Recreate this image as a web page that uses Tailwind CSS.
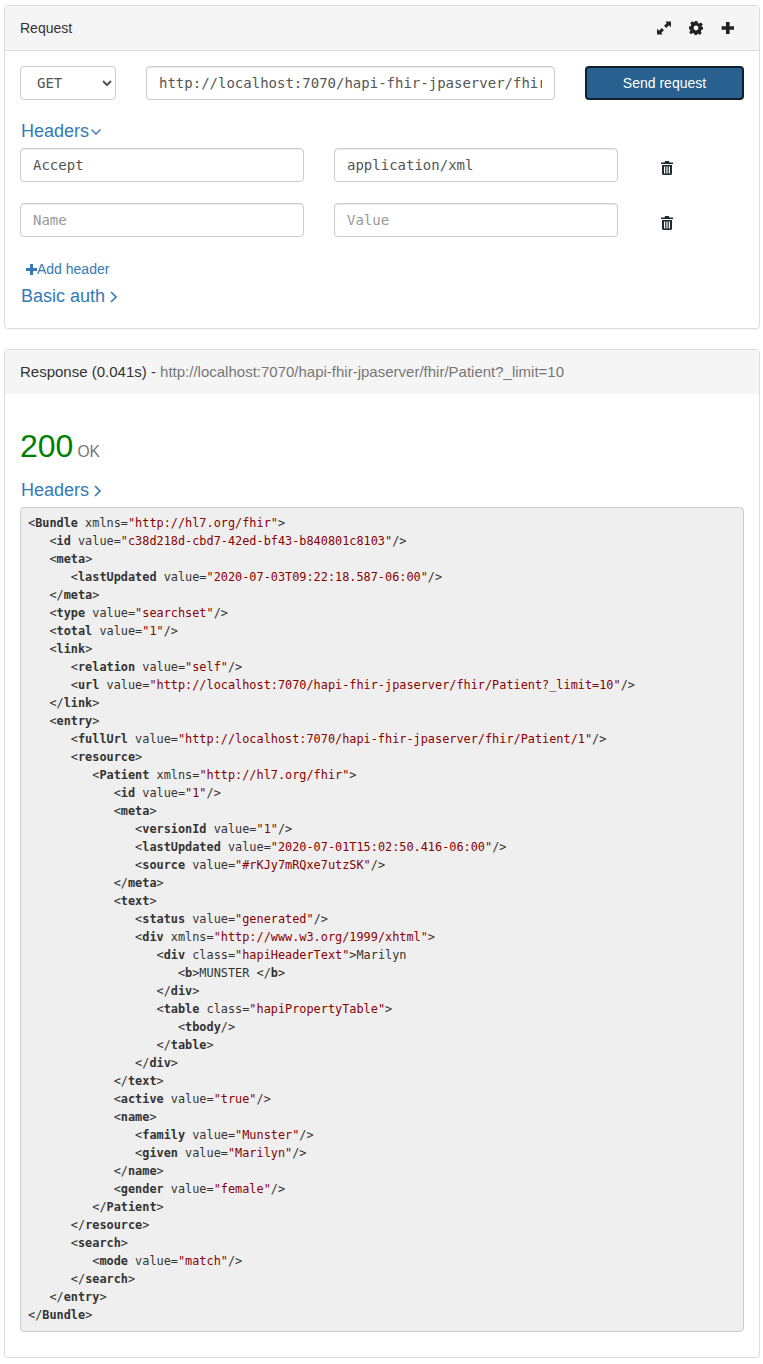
<!DOCTYPE html>
<html lang="en">
<head>
    <meta charset="UTF-8">
    <title>FHIR request</title>
    <script src="https://cdn.jsdelivr.net/npm/@tailwindcss/browser@4"></script>
</head>
<body class="bg-white font-['Liberation_Sans',sans-serif] text-[14px] text-[#333] leading-[20px]">
<div class="pl-[4px] pr-[3px] pt-[5px]">

    <!-- request panel -->
    <div class="border border-[#ddd] rounded-[4px] shadow-[0_1px_1px_rgba(0,0,0,0.05)] h-[324px]">
        <div class="flex items-center justify-between h-[45px] bg-[#f5f5f5] border-b border-[#ddd] rounded-t-[3px] pl-[15px] pr-[24px]">
            <span class="text-[14px]">Request</span>
            <div class="flex items-center gap-[18px] text-[#222]">
                <svg class="w-[14px] h-[14px]" viewBox="0 0 14 14" fill="currentColor"><path d="M8.2 0.5H14V6.3L11.9 4.2 9.2 6.9 7.1 4.8 9.8 2.1ZM5.8 13.5H0V7.7L2.1 9.8 4.8 7.1 6.9 9.2 4.2 11.9Z"/></svg>
                <svg class="w-[14px] h-[14px]" viewBox="0 0 14 14" fill="currentColor"><path fill-rule="evenodd" d="M5.6 0H8.4L8.8 2 10.2 2.6 12 1.5 13.9 3.4 12.5 5.1 13 6 14 6V8.4L12.4 8.8 11.8 10.2 12.7 12 10.7 13.9 9 12.6 8.4 12.9 8 14H5.6L5.2 12.6 3.8 12 2 13.2 0.2 11.2 1.5 9.5 1 8.4 0 8.2V5.6L1.6 5.2 2.2 3.8 1.2 2 3.2 0.2 5 1.5 5.4 1.2ZM7 4.6A2.4 2.4 0 1 0 7 9.4 2.4 2.4 0 1 0 7 4.6Z"/></svg>
                <svg class="w-[14px] h-[14px]" viewBox="0 0 14 14" fill="currentColor"><path d="M5 1H8.6V5.2H13V8.8H8.6V13H5V8.8H0.6V5.2H5Z"/></svg>
            </div>
        </div>
        <div class="px-[15px] pt-[15px]">
            <div class="flex items-center">
                <select class="w-[96px] h-[34px] bg-white border border-[#ccc] rounded-[4px] pl-[12px] text-[14px] text-[#555] font-['DejaVu_Sans_Mono',monospace] shrink-0">
                    <option>GET</option>
                </select>
                <input class="w-[409px] h-[34px] ml-[30px] border border-[#ccc] rounded-[4px] px-[12px] text-[14px] text-[#555] font-['DejaVu_Sans_Mono',monospace] shadow-[inset_0_1px_1px_rgba(0,0,0,0.075)]" value="http://localhost:7070/hapi-fhir-jpaserver/fhir/Patient?_limit=10">
                <button class="w-[159px] h-[34px] ml-[30px] bg-[#286090] border-2 border-[#0f1f2c] rounded-[4px] text-white text-[14px]">Send request</button>
            </div>
            <a class="flex items-center gap-[2px] mt-[21px] ml-[1px] text-[18px] text-[#337ab7] leading-[20px]">Headers
                <svg class="w-[10px] h-[10px] mt-[1px]" viewBox="0 0 10 10" fill="none" stroke="currentColor" stroke-width="1.4"><path d="M0.5 2.5L5 7 9.5 2.5"/></svg>
            </a>
            <div class="flex items-center mt-[7px]">
                <input class="w-[284px] h-[34px] border border-[#ccc] rounded-[4px] px-[12px] text-[14px] text-[#555] font-['DejaVu_Sans_Mono',monospace] shadow-[inset_0_1px_1px_rgba(0,0,0,0.075)]" value="Accept">
                <input class="w-[284px] h-[34px] ml-[30px] border border-[#ccc] rounded-[4px] px-[12px] text-[14px] text-[#555] font-['DejaVu_Sans_Mono',monospace] shadow-[inset_0_1px_1px_rgba(0,0,0,0.075)]" value="application/xml">
                <svg class="w-[12px] h-[14px] ml-[43px] mt-[5px] text-[#1f2a30]" viewBox="0 0 12 14" fill="currentColor"><path fill-rule="evenodd" d="M4.2 0H7.8L8.6 1.5H12V3H0V1.5H3.4ZM1 4H11V13L10 14H2L1 13ZM3 5.5V12.5H4.2V5.5ZM5.4 5.5V12.5H6.6V5.5ZM7.8 5.5V12.5H9V5.5Z"/></svg>
            </div>
            <div class="flex items-center mt-[21px]">
                <input class="w-[284px] h-[34px] border border-[#ccc] rounded-[4px] px-[12px] text-[14px] text-[#555] placeholder:text-[#999] font-['DejaVu_Sans_Mono',monospace] shadow-[inset_0_1px_1px_rgba(0,0,0,0.075)]" placeholder="Name">
                <input class="w-[284px] h-[34px] ml-[30px] border border-[#ccc] rounded-[4px] px-[12px] text-[14px] text-[#555] placeholder:text-[#999] font-['DejaVu_Sans_Mono',monospace] shadow-[inset_0_1px_1px_rgba(0,0,0,0.075)]" placeholder="Value">
                <svg class="w-[12px] h-[14px] ml-[43px] mt-[5px] text-[#1f2a30]" viewBox="0 0 12 14" fill="currentColor"><path fill-rule="evenodd" d="M4.2 0H7.8L8.6 1.5H12V3H0V1.5H3.4ZM1 4H11V13L10 14H2L1 13ZM3 5.5V12.5H4.2V5.5ZM5.4 5.5V12.5H6.6V5.5ZM7.8 5.5V12.5H9V5.5Z"/></svg>
            </div>
            <a class="flex items-center mt-[22px] ml-[6px] text-[14px] text-[#337ab7]">
                <svg class="w-[11px] h-[11px]" viewBox="0 0 11 11" fill="currentColor"><path d="M4 0H7V4H11V7H7V11H4V7H0V4H4Z"/></svg>Add header
            </a>
            <a class="flex items-center gap-[4px] mt-[7px] ml-[1px] text-[18px] text-[#337ab7] leading-[20px]">Basic auth
                <svg class="w-[8px] h-[12px] mt-[1px]" viewBox="0 0 8 12" fill="none" stroke="currentColor" stroke-width="1.6"><path d="M2 1L7 6 2 11"/></svg>
            </a>
        </div>
    </div>

    <!-- response panel -->
    <div class="mt-[20px] border border-[#ddd] rounded-[4px] shadow-[0_1px_1px_rgba(0,0,0,0.05)] pb-[25px]">
        <div class="flex items-center h-[44px] bg-[#f5f5f5] rounded-t-[3px] px-[15px] text-[15px]">
            <span>Response (0.041s) - <span class="text-[#777]">http://localhost:7070/hapi-fhir-jpaserver/fhir/Patient?_limit=10</span></span>
        </div>
        <div class="px-[15px]">
            <div class="mt-[32px] flex items-baseline leading-[40px]">
                <span class="text-[32px] text-[#008000]">200</span>
                <span class="ml-[4px] text-[15.6px] text-[#777]">OK</span>
            </div>
            <a class="flex items-center gap-[4px] mt-[8px] ml-[1px] text-[18px] text-[#337ab7] leading-[20px]">Headers
                <svg class="w-[8px] h-[12px] mt-[1px]" viewBox="0 0 8 12" fill="none" stroke="currentColor" stroke-width="1.6"><path d="M2 1L7 6 2 11"/></svg>
            </a>
            <pre class="mt-[7px] bg-[#efefef] border border-[#ccc] rounded-[4px] pl-[7px] pt-[6px] pb-[7px] text-[11.87px] leading-[18px] text-[#333] font-['DejaVu_Sans_Mono',monospace]">&lt;<b>Bundle</b> xmlns=<span class="text-[#800]">"http://hl7.org/fhir"</span>&gt;
   &lt;<b>id</b> value=<span class="text-[#800]">"c38d218d-cbd7-42ed-bf43-b840801c8103"</span>/&gt;
   &lt;<b>meta</b>&gt;
      &lt;<b>lastUpdated</b> value=<span class="text-[#800]">"2020-07-03T09:22:18.587-06:00"</span>/&gt;
   &lt;/<b>meta</b>&gt;
   &lt;<b>type</b> value=<span class="text-[#800]">"searchset"</span>/&gt;
   &lt;<b>total</b> value=<span class="text-[#800]">"1"</span>/&gt;
   &lt;<b>link</b>&gt;
      &lt;<b>relation</b> value=<span class="text-[#800]">"self"</span>/&gt;
      &lt;<b>url</b> value=<span class="text-[#800]">"http://localhost:7070/hapi-fhir-jpaserver/fhir/Patient?_limit=10"</span>/&gt;
   &lt;/<b>link</b>&gt;
   &lt;<b>entry</b>&gt;
      &lt;<b>fullUrl</b> value=<span class="text-[#800]">"http://localhost:7070/hapi-fhir-jpaserver/fhir/Patient/1"</span>/&gt;
      &lt;<b>resource</b>&gt;
         &lt;<b>Patient</b> xmlns=<span class="text-[#800]">"http://hl7.org/fhir"</span>&gt;
            &lt;<b>id</b> value=<span class="text-[#800]">"1"</span>/&gt;
            &lt;<b>meta</b>&gt;
               &lt;<b>versionId</b> value=<span class="text-[#800]">"1"</span>/&gt;
               &lt;<b>lastUpdated</b> value=<span class="text-[#800]">"2020-07-01T15:02:50.416-06:00"</span>/&gt;
               &lt;<b>source</b> value=<span class="text-[#800]">"#rKJy7mRQxe7utzSK"</span>/&gt;
            &lt;/<b>meta</b>&gt;
            &lt;<b>text</b>&gt;
               &lt;<b>status</b> value=<span class="text-[#800]">"generated"</span>/&gt;
               &lt;<b>div</b> xmlns=<span class="text-[#800]">"http://www.w3.org/1999/xhtml"</span>&gt;
                  &lt;<b>div</b> class=<span class="text-[#800]">"hapiHeaderText"</span>&gt;Marilyn
                     &lt;<b>b</b>&gt;MUNSTER &lt;/<b>b</b>&gt;
                  &lt;/<b>div</b>&gt;
                  &lt;<b>table</b> class=<span class="text-[#800]">"hapiPropertyTable"</span>&gt;
                     &lt;<b>tbody</b>/&gt;
                  &lt;/<b>table</b>&gt;
               &lt;/<b>div</b>&gt;
            &lt;/<b>text</b>&gt;
            &lt;<b>active</b> value=<span class="text-[#800]">"true"</span>/&gt;
            &lt;<b>name</b>&gt;
               &lt;<b>family</b> value=<span class="text-[#800]">"Munster"</span>/&gt;
               &lt;<b>given</b> value=<span class="text-[#800]">"Marilyn"</span>/&gt;
            &lt;/<b>name</b>&gt;
            &lt;<b>gender</b> value=<span class="text-[#800]">"female"</span>/&gt;
         &lt;/<b>Patient</b>&gt;
      &lt;/<b>resource</b>&gt;
      &lt;<b>search</b>&gt;
         &lt;<b>mode</b> value=<span class="text-[#800]">"match"</span>/&gt;
      &lt;/<b>search</b>&gt;
   &lt;/<b>entry</b>&gt;
&lt;/<b>Bundle</b>&gt;</pre>
        </div>
    </div>
</div>
</body>
</html>
